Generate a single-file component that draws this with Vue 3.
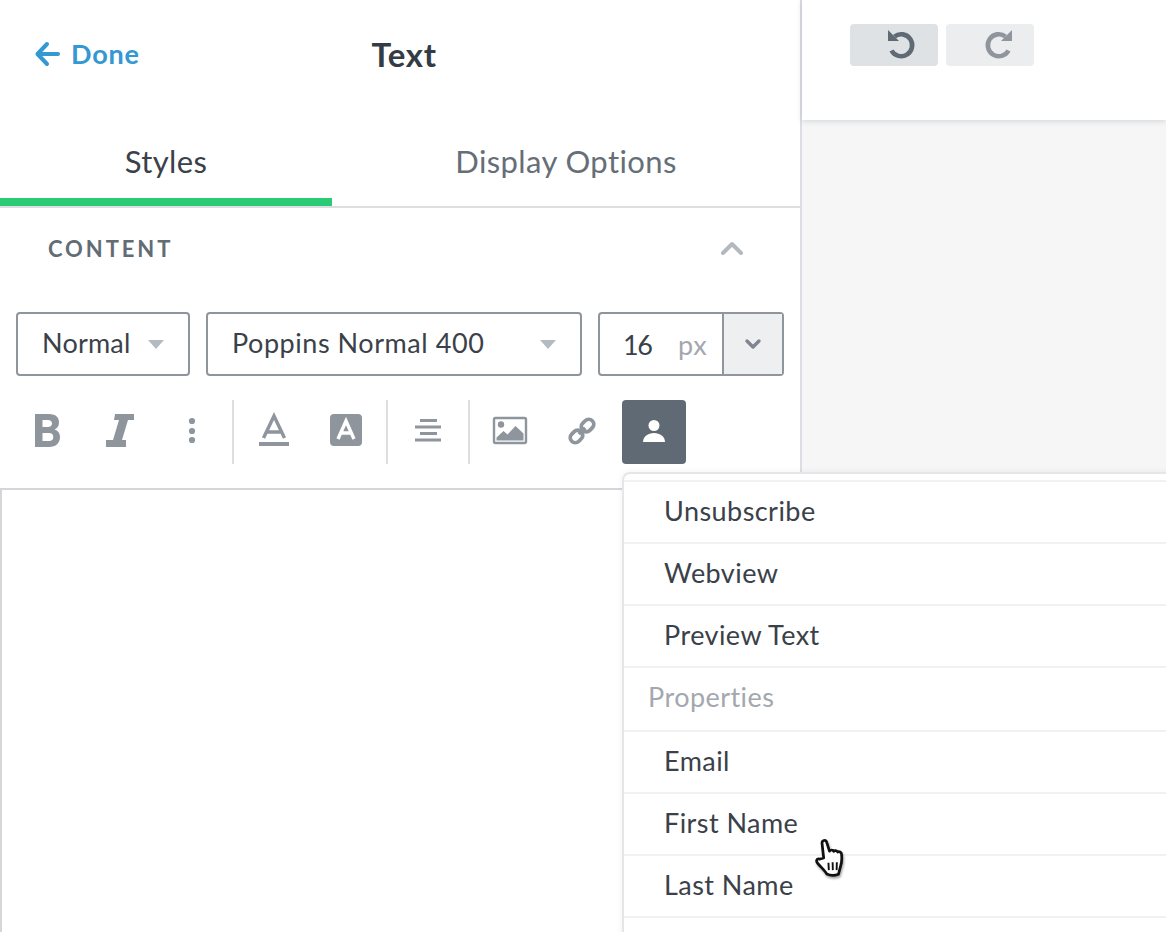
<script setup>
const tools = [
  { key: 'bold', sep: false },
  { key: 'italic', sep: false },
  { key: 'more', sep: true },
  { key: 'color', sep: false },
  { key: 'bg', sep: true },
  { key: 'align', sep: true },
  { key: 'image', sep: false },
  { key: 'link', sep: false },
  { key: 'person', sep: false }
]
const menu = [
  { label: 'Unsubscribe' },
  { label: 'Webview' },
  { label: 'Preview Text' },
  { label: 'Properties', head: true },
  { label: 'Email' },
  { label: 'First Name' },
  { label: 'Last Name' }
]
</script>

<template>
  <div class="page">
    <section class="panel">
      <header class="top">
        <a class="done">
          <svg width="26" height="26" viewBox="0 0 26 26" class="back">
            <path d="M13 3 3.500 13 13 23M4.500 13H24" fill="none" stroke="#3498d3" stroke-width="4" stroke-linecap="round" stroke-linejoin="round" />
          </svg>
          Done
        </a>
        <h1 class="title">Text</h1>
      </header>
      <nav class="tabs">
        <div class="tab active">Styles</div>
        <div class="tab">Display Options</div>
      </nav>
      <div class="section">
        <span class="section-name">CONTENT</span>
        <svg width="24" height="14" viewBox="0 0 24 14">
          <path d="M3 12 12 3l9 9" fill="none" stroke="#b4b9bf" stroke-width="4" stroke-linecap="round" stroke-linejoin="round" />
        </svg>
      </div>
      <div class="selects">
        <div class="select s1"><span class="tight">Normal</span><i class="caret"></i></div>
        <div class="select s2">Poppins Normal 400<i class="caret"></i></div>
        <div class="size">
          <span class="num">16</span><span class="px">px</span>
          <span class="size-btn">
            <svg width="18" height="12" viewBox="0 0 18 12">
              <path d="M3 3l6 6 6-6" fill="none" stroke="#7f868e" stroke-width="3.400" stroke-linecap="round" stroke-linejoin="round" />
            </svg>
          </span>
        </div>
      </div>
      <div class="tools">
        <template v-for="t in tools" :key="t.key">
          <button class="tool" :class="{ on: t.key === 'person' }">
            <svg width="64" height="64" viewBox="0 0 64 64">
              <path v-if="t.key === 'bold'" fill="#8f959d" fill-rule="evenodd" d="M19 14h14c7 0 10 3.500 10 8.500 0 3.500-2 6-4.500 7 3.500 1 5.500 4 5.500 7.500 0 6-4 10-11 10H19zm7.500 6v7H32c2.500 0 4-1.300 4-3.500S34.500 20 32 20zm0 13v8H33c2.800 0 4.300-1.500 4.300-4S35.800 33 33 33z" />
              <path v-else-if="t.key === 'italic'" fill="#8f959d" d="M27 14h19v6h-6l-6 20h4v7H18v-7h7l6-20h-5z" />
              <g v-else-if="t.key === 'more'" fill="#8f959d">
                <circle cx="32" cy="21" r="3.100" /><circle cx="32" cy="31" r="3.100" /><circle cx="32" cy="40" r="3.100" />
              </g>
              <g v-else-if="t.key === 'color'">
                <path d="M21.500 38 32 16l10.500 22M25 32h14" fill="none" stroke="#8f959d" stroke-width="3.400" />
                <rect x="17" y="42" width="30" height="4" fill="#8f959d" />
              </g>
              <g v-else-if="t.key === 'bg'">
                <rect x="16" y="14" width="32" height="32" rx="4" fill="#8f959d" />
                <path d="M24 39 32 21l8 18M27 33h10" fill="none" stroke="#fff" stroke-width="3.400" />
              </g>
              <g v-else-if="t.key === 'align'" fill="#8f959d">
                <rect x="24" y="19" width="17" height="3" /><rect x="19" y="25.500" width="26" height="3" />
                <rect x="24" y="32" width="17" height="3" /><rect x="19" y="38.500" width="26" height="3" />
              </g>
              <g v-else-if="t.key === 'image'">
                <rect x="16" y="18" width="32" height="25" rx="1.500" fill="none" stroke="#8f959d" stroke-width="2.400" />
                <circle cx="23" cy="24.500" r="3.200" fill="#8f959d" />
                <path d="M18.500 40.500v-3l7-6.500 4 3.500 8-8.500 8 7.500v7z" fill="#8f959d" />
              </g>
              <g v-else-if="t.key === 'link'" fill="none" stroke="#8f959d" stroke-width="3.800" transform="rotate(-45 32 31)">
                <rect x="17.500" y="26" width="13.500" height="10" rx="5" />
                <rect x="33" y="26" width="13.500" height="10" rx="5" />
                <path d="M27.500 31h9" />
              </g>
              <g v-else fill="#fff">
                <circle cx="32" cy="25.500" r="5.500" />
                <path d="M21 42c0-5.500 5-9 11-9s11 3.500 11 9z" />
              </g>
            </svg>
          </button>
          <span v-if="t.sep" class="sep"></span>
        </template>
      </div>
      <div class="editor"></div>
    </section>

    <section class="side">
      <div class="bar">
        <button class="hist undo">
          <svg width="88" height="42" viewBox="0 0 88 42">
            <path d="M44.500 12.500a11 11 0 1 1-3 14" fill="none" stroke="#5f6a74" stroke-width="4.600" />
            <path d="M38 6v11h11z" fill="#5f6a74" />
          </svg>
        </button>
        <button class="hist redo">
          <svg width="88" height="42" viewBox="0 0 88 42">
            <path d="M59.500 12.500a11 11 0 1 0 3 14" fill="none" stroke="#8f959d" stroke-width="4.600" />
            <path d="M66 6v11H55z" fill="#8f959d" />
          </svg>
        </button>
      </div>
    </section>

    <div class="menu">
      <div class="menu-cap"></div>
      <div v-for="m in menu" :key="m.label" class="row" :class="{ head: m.head }">{{ m.label }}</div>
    </div>

    <svg class="hand" width="36" height="40" viewBox="0 0 32 38">
      <path d="M10 19 8.500 5.500C8 2 12 1 13 4.500l2.500 8c1-1.500 3-1.500 4 .2 1-1.200 3-1 3.800.6 1.500-.8 3.600.2 3.700 2.200.4 4 .2 8-1 11.500L24 34.500c-4 1.500-8 1.200-11-.2-1.500-3-5-6-8.500-10C2.500 22 3 19.500 6 20z" fill="#fff" stroke="#111" stroke-width="2.600" stroke-linejoin="round" />
      <path d="M14.500 23.500l.4 7M18.500 23l.2 7.500M22.500 23l-.2 7.500" stroke="#111" stroke-width="1.800" fill="none" />
    </svg>
  </div>
</template>

<style scoped>
.page {
  position: relative;
  display: flex;
  width: 1166px;
  height: 932px;
  overflow: hidden;
  background: #fff;
  font-family: Lato, "Open Sans", sans-serif;
  color: #3a4149;
}
.panel {
  width: 800px;
  flex: none;
  display: flex;
  flex-direction: column;
  border-right: 2px solid #dcdee3;
}
.top {
  position: relative;
  height: 108px;
  display: flex;
  align-items: center;
  justify-content: center;
}
.done {
  position: absolute;
  left: 34px;
  top: 41px;
  display: flex;
  align-items: center;
  gap: 11px;
  font-size: 27px;
  line-height: 26px;
  font-weight: 700;
  letter-spacing: 0.8px;
  color: #3498d3;
}
.title {
  margin: 0 0 0 8px;
  font-size: 33px;
  font-weight: 700;
  letter-spacing: 0.6px;
  color: #333c44;
}
.tabs {
  height: 98px;
  display: flex;
  border-bottom: 2px solid #dcdee1;
  font-size: 31px;
  letter-spacing: 0.4px;
}
.tab {
  flex: 1;
  display: flex;
  justify-content: center;
  padding-top: 34px;
  color: #666e77;
}
.tab.active {
  flex: none;
  width: 332px;
  color: #3a4149;
  box-shadow: inset 0 -8px 0 #2bcb75;
}
.section {
  height: 80px;
  padding: 0 56px 0 48px;
  display: flex;
  align-items: center;
  justify-content: space-between;
}
.section-name {
  font-size: 22px;
  font-weight: 700;
  letter-spacing: 2.9px;
  color: #626c75;
}
.selects {
  margin-top: 24px;
  padding: 0 16px;
  display: flex;
  gap: 16px;
  height: 64px;
}
.select, .size {
  box-sizing: border-box;
  border: 2px solid #8f959c;
  border-radius: 4px;
  font-size: 27px;
  display: flex;
  align-items: center;
  position: relative;
  letter-spacing: 0.55px;
}
.select { padding: 0 0 4px 24px; }
.tight { letter-spacing: 0.2px; }
.s1 { width: 174px; }
.s2 { width: 376px; }
.caret {
  position: absolute;
  right: 24px;
  top: 26px;
  width: 0;
  height: 0;
  border: 8px solid transparent;
  border-top: 9px solid #b4bac1;
  border-bottom: 0;
}
.size { width: 186px; }
.num { margin-left: 23px; width: 55px; letter-spacing: -1.5px; }
.px { color: #a3a8ae; width: 44px; }
.size-btn {
  margin-left: auto;
  box-sizing: border-box;
  width: 60px;
  height: 100%;
  display: flex;
  align-items: center;
  justify-content: center;
  background: #eeeff0;
  border-left: 2px solid #8f959c;
}
.tools {
  margin-top: 24px;
  padding: 0 16px;
  display: flex;
  gap: 8px;
  height: 64px;
}
.tool {
  width: 64px;
  height: 64px;
  padding: 0;
  border: 0;
  border-radius: 4px;
  background: none;
}
.tool svg { display: block; }
.tool.on { background: #5f6a74; }
.sep { width: 2px; background: #dcdee1; }
.editor {
  flex: 1;
  margin-top: 24px;
  border-top: 2px solid #d4d6da;
  border-left: 2px solid #d4d6da;
}
.side {
  flex: 1;
  background: #f6f6f7;
}
.bar {
  box-sizing: border-box;
  height: 120px;
  padding: 24px 0 0 48px;
  display: flex;
  gap: 8px;
  background: #fff;
  box-shadow: 0 1px 6px rgba(60, 70, 80, 0.2);
}
.hist {
  width: 88px;
  height: 42px;
  padding: 0;
  border: 0;
  border-radius: 4px;
}
.hist svg { display: block; }
.undo { background: #dfe2e5; }
.redo { background: #ecedef; }
.menu {
  position: absolute;
  left: 622px;
  top: 472px;
  bottom: -20px;
  width: 560px;
  box-sizing: border-box;
  border: 2px solid #e4e6e9;
  border-radius: 8px 8px 0 0;
  background: #fff;
  box-shadow: 0 0 6px rgba(60, 70, 80, 0.08);
  font-size: 27px;
  letter-spacing: 0.45px;
}
.menu-cap {
  box-sizing: border-box;
  height: 8px;
  border-bottom: 2px solid #f0f1f2;
}
.row {
  box-sizing: border-box;
  height: 62px;
  padding: 0 0 4px 40px;
  display: flex;
  align-items: center;
  border-bottom: 2px solid #f0f1f2;
}
.row.head {
  height: 64px;
  padding: 0 0 6px 24px;
  color: #a3a8ae;
}
.hand {
  position: absolute;
  left: 812px;
  top: 838px;
  filter: drop-shadow(1px 2px 1px rgba(0, 0, 0, 0.35));
}
</style>
